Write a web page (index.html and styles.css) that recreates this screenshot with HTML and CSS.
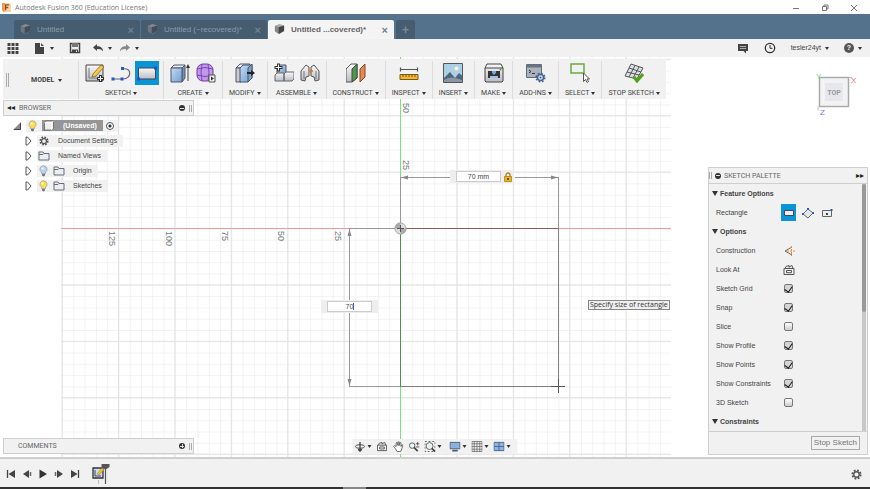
FILE: index.html
```
<!DOCTYPE html>
<html lang="en">
<head>
  <meta charset="UTF-8">
  <title>Autodesk Fusion 360 (Education License)</title>
  <meta name="viewport" content="width=device-width,initial-scale=1">
  <link rel="stylesheet" href="styles.css">
</head>
<body>
  <!-- shared icons -->
  <svg class="defs" aria-hidden="true">
    <defs>
      <linearGradient id="blue" x1="0" y1="0" x2="1" y2="1"><stop offset="0" stop-color="#c4dcf4"/><stop offset="1" stop-color="#6f9fd2"/></linearGradient>
      <linearGradient id="grey" x1="0" y1="0" x2="0" y2="1"><stop offset="0" stop-color="#fafafa"/><stop offset="1" stop-color="#b9bcc4"/></linearGradient>
      <symbol id="cube" viewBox="0 0 12 12"><path d="M1 2 6 0l5 1.500v6L6 11 1 8z" fill="#aaa"/><path d="M1 2l4 1.500V11L1 8z" fill="#888"/><path d="M5 3.500l6-2v6L5 11z" fill="#444"/></symbol>
      <symbol id="bulb" viewBox="0 0 9 12"><path d="M4.500.8A3.500 3.500 0 0 0 2.500 7.200V8.500h4V7.200A3.500 3.500 0 0 0 4.500.8z" stroke="#888" stroke-width=".6"/><path d="M3 9h3v1.500L4.500 11.500 3 10.500z" fill="#777"/><circle cx="3.500" cy="3.500" r="1.200" fill="#fff" opacity=".7"/></symbol>
      <symbol id="folder" viewBox="0 0 12 10"><path d="M1 9V1h4l1 1.500h5V9zM1 3.500h4l1-1" fill="#eceef2" stroke="#666c78"/></symbol>
      <symbol id="gear" viewBox="0 0 12 12"><circle cx="6" cy="6" r="4.500" fill="none" stroke="#555" stroke-width="2" stroke-dasharray="2 1.530"/><circle cx="6" cy="6" r="3" fill="none" stroke="#555" stroke-width="1.500"/></symbol>
      <symbol id="twist" viewBox="0 0 7 10"><path d="M1 1h1.500L6 5 2.500 9H1z" fill="#f4f4f4" stroke="#555"/></symbol>
      <symbol id="look" viewBox="0 0 12 12"><path d="M1 4.500h10v6H1zM3.500 6.500h5v2.200h-5zM2 4.500l1-2 3-1v2M6 3l3-1.500 1 3" fill="none" stroke="#555"/></symbol>
    </defs>
  </svg>

  <header class="titlebar">
    <svg class="logo" viewBox="0 0 10 10"><path d="M0 0h8l2 2v8H2L0 8z" fill="#fbd3a8"/><path d="M0 0h3v10H2L0 8z" fill="#f09a4e"/><path d="M4 8V2h4M4 5h3" fill="none" stroke="#9a4d1c" stroke-width="1.500"/></svg>
    <h1>Autodesk Fusion 360 (Education License)</h1>
    <div class="window-btns">
      <button aria-label="Minimize"><svg viewBox="0 0 8 8"><path d="M1 4.500h6"/></svg></button>
      <button aria-label="Restore"><svg viewBox="0 0 8 8"><path d="M1.500 2.500h4v4h-4zM3 2V1h4v4H6"/></svg></button>
      <button aria-label="Close"><svg viewBox="0 0 8 8"><path d="M1 1l6 6M7 1L1 7"/></svg></button>
    </div>
  </header>

  <nav class="tabs">
    <div class="tab"><svg><use href="#cube"/></svg><span>Untitled</span><button aria-label="Close tab">×</button></div>
    <div class="tab"><svg><use href="#cube"/></svg><span>Untitled (~recovered)*</span><button aria-label="Close tab">×</button></div>
    <div class="tab active"><svg><use href="#cube"/></svg><span>Untitled ...covered)*</span><button aria-label="Close tab">×</button></div>
    <button class="new-tab" aria-label="New tab">+</button>
  </nav>

  <div class="quickbar">
    <button aria-label="Data panel"><svg viewBox="0 0 12 12"><path d="M.5 1h3v3h-3zM4.500 1h3v3h-3zM8.500 1h3v3h-3zM.5 5h3v3h-3zM4.500 5h3v3h-3zM8.500 5h3v3h-3zM.5 9h3v3h-3zM4.500 9h3v3h-3zM8.500 9h3v3h-3z" fill="#444"/></svg></button>
    <button class="caret" aria-label="File"><svg viewBox="0 0 12 12"><path d="M1 1h5v4h4v7H1z" fill="#444"/><path d="M7 1l3 3H7z" fill="#555"/></svg></button>
    <button aria-label="Save"><svg viewBox="0 0 12 12"><path d="M1.500 1.500h9v9h-9z" fill="#eee" stroke="#444" stroke-width="1.500"/><path d="M3 1h6v4H3z" fill="#777"/><path d="M3 7.500h6V11H3z" fill="#444"/><path d="M7 8.500h1V10H7z" fill="#eee"/></svg></button>
    <button class="caret undo" aria-label="Undo"><svg viewBox="0 0 12 12"><path d="M1 5.500 5 2v2.300c4 0 6 2 6 5.200-1-2-3-2.700-6-2.500v2z" fill="#444"/></svg></button>
    <button class="caret redo" aria-label="Redo"><svg viewBox="0 0 12 12"><path d="M11 5.500 7 2v2.300c-4 0-6 2-6 5.200 1-2 3-2.700 6-2.500v2z" fill="#888"/></svg></button>
    <div class="account">
      <button aria-label="Notifications"><svg viewBox="0 0 12 12"><path d="M1 2h10v7H9v2.500L6.500 9H1z" fill="#444"/><path d="M3 4.500h6M3 6.500h6" stroke="#aaa"/></svg></button>
      <button aria-label="Job status"><svg viewBox="0 0 12 12"><circle cx="6" cy="6" r="4.700" fill="none" stroke="#333" stroke-width="1.300"/><path d="M6 3v3.300h2.500" fill="none" stroke="#333"/></svg></button>
      <button class="caret">tesler24yt</button>
      <button class="caret" aria-label="Help"><span class="help">?</span></button>
    </div>
  </div>

  <main class="workspace">
    <!-- sketch canvas: grid, axes, rectangle being drawn -->
    <svg class="canvas" width="672" height="400">
      <defs>
        <pattern id="minor" x="400.500" y="171.500" width="11.280" height="11.280" patternUnits="userSpaceOnUse"><path d="M0 0H12M0 0V12" stroke="#e6e6e6" fill="none"/></pattern>
        <pattern id="major" x="400" y="171" width="56.400" height="56.400" patternUnits="userSpaceOnUse"><path d="M0 .5H57M.5 0V57" stroke="#e2e2e2" fill="none"/></pattern>
      </defs>
      <rect x="61" width="610" height="400" fill="url(#minor)"/>
      <rect x="61" width="610" height="400" fill="url(#major)"/>
      <path d="M61 171.500H671" stroke="#ee9c9c"/>
      <path d="M400.500 0V400" stroke="#7be27b"/>
      <path d="M349 171.500H400M400.500 120V171M349 329.500H400" stroke="#999"/>
      <path d="M400 171.500H558" stroke="#8a5c5c"/>
      <path d="M400.500 171V329" stroke="#4f8f57"/>
      <path d="M558.500 120V171" stroke="#999"/>
      <path d="M558.500 171V329M400 329.500H558" stroke="#808080"/>
      <path d="M401 120.500H450M515 120.500H558M349.500 172V243M349.500 256V329" stroke="#999"/>
      <path d="M401 120.500l7-2v4zM558 120.500l-7-2v4zM349.500 172l-2 7h4zM349.500 329l-2-7h4z" fill="#888"/>
      <path d="M551 329.500H565M558.500 322V336" stroke="#555"/>
      <circle cx="400.500" cy="171.500" r="5.500" fill="#ddd" stroke="#aaa"/>
      <path d="M400.500 171.500v-6a6 6 0 0 0-6 6zM400.500 171.500v6a6 6 0 0 0 6-6z" fill="#aaa"/>
      <path d="M400.500 168v7M397 171.500h7" stroke="#555"/>
      <g class="ruler">
        <text transform="translate(109 174) rotate(90)">125</text>
        <text transform="translate(166 174) rotate(90)">100</text>
        <text transform="translate(222 174) rotate(90)">75</text>
        <text transform="translate(278 174) rotate(90)">50</text>
        <text transform="translate(335 174) rotate(90)">25</text>
        <text transform="translate(403 46) rotate(90)">50</text>
        <text transform="translate(403 103) rotate(90)">25</text>
      </g>
    </svg>

    <div class="toolbar">
      <div class="model"><i class="grip"></i><button class="caret">MODEL</button></div>
      <div class="group">
        <div class="tools">
          <button aria-label="Create sketch"><svg viewBox="0 0 20 20"><path d="M1 2h17v16H1z" fill="url(#grey)" stroke="#444"/><path d="M4 5v10h10" fill="none" stroke="#777"/><path d="M8 11l8-9 3 2-8 9-4 1z" fill="#f4c84a" stroke="#7a5a20" stroke-width=".7"/><path d="M15.500 12v7M12 15.500h7" stroke="#333" stroke-width="3"/><path d="M15.500 13v5M13 15.500h5" stroke="#fff"/></svg></button>
          <button aria-label="Line"><svg viewBox="0 0 20 20"><path d="M2 16h10M12 6c9-2 9 10 0 10" fill="none" stroke="#667" stroke-width="1.200"/><path d="M.5 14.500h3v3h-3zM9.500 14.500h3v3h-3zM10 4h3v3h-3z" fill="#2458c8"/></svg></button>
          <button class="on" aria-label="Rectangle"><svg viewBox="0 0 20 20"><path d="M1.500 5h17v11h-17z" fill="url(#grey)" stroke="#445"/><path d="M0 14.500h3v3H0zM17 3.500h3v3h-3z" fill="#2450c0"/></svg></button>
        </div>
        <button class="caret">SKETCH</button>
      </div>
      <div class="group">
        <div class="tools">
          <button aria-label="Extrude"><svg viewBox="0 0 20 20"><path d="M1 5l3-3h11l-3 3z" fill="#e1eefb" stroke="#556"/><path d="M12 5l3-3v13l-3 4z" fill="#6c93bd" stroke="#556"/><path d="M1 5h11v14H1z" fill="url(#blue)" stroke="#556"/><path d="M18 18V4" stroke="#444"/><path d="M18 1l-2 4h4z" fill="#333"/></svg></button>
          <button aria-label="Create form"><svg viewBox="0 0 20 20"><rect x="1" y="1" width="16" height="17" rx="6" fill="#c397ec" stroke="#6f3ba5"/><path d="M1 6q8-3 16 0M1 12q8 3 16 0M6 1q-2 8 0 17M12 1q2 8 0 17" fill="none" stroke="#7b46b0"/><path d="M13 12h6v7h-6z" fill="#eee" stroke="#555"/><path d="M15 13.500l3 2-3 2z" fill="#333"/></svg></button>
        </div>
        <button class="caret">CREATE</button>
      </div>
      <div class="group">
        <div class="tools">
          <button aria-label="Press pull"><svg viewBox="0 0 20 20"><path d="M1 5l4-4h10l-4 4z" fill="#eef" stroke="#556"/><path d="M1 5h5v14H1z" fill="#ccc" stroke="#556"/><path d="M5 5l3-3h9v13l-4 4H5z" fill="url(#blue)" stroke="#456"/><path d="M13 19V5l4-4v14z" fill="#7da5cf" stroke="#456"/><path d="M12 10h5" stroke="#222" stroke-width="2"/><path d="M16 7l4 3-4 3z" fill="#222"/></svg></button>
        </div>
        <button class="caret">MODIFY</button>
      </div>
      <div class="group">
        <div class="tools">
          <button aria-label="New component"><svg viewBox="0 0 20 20"><path d="M3 4l2-2h7v9H3z" fill="url(#blue)" stroke="#556"/><path d="M1 12l2-2h7v8H1zM10 11l2-2h8v7l-2 2h-8z" fill="url(#grey)" stroke="#666"/><path d="M4.500.5v8M.5 4.500h8" stroke="#333" stroke-width="3"/><path d="M4.500 1.500v6M1.500 4.500h6" stroke="#fff"/></svg></button>
          <button aria-label="Joint"><svg viewBox="0 0 20 20"><path d="M1 8l5-6 3 2v9l-3 1-1 4-4-1zM19 8l-5-6-3 2v9l3 1 1 4 4-1z" fill="url(#grey)" stroke="#555"/><path d="M4 8v8M16 8v8" stroke="#777"/><path d="M9 8h4M11 6v4" stroke="#e3772a" stroke-width="1.500"/></svg></button>
        </div>
        <button class="caret">ASSEMBLE</button>
      </div>
      <div class="group">
        <div class="tools">
          <button aria-label="Offset plane"><svg viewBox="0 0 20 20"><path d="M0 6l5-5h6v14l-5 4H0z" fill="url(#grey)" stroke="#555"/><path d="M6 6l5-5v14l-5 4z" fill="#4c9a4c" stroke="#444"/><path d="M14 6l5-5v13l-5 5z" fill="#e88a50" stroke="#854522"/></svg></button>
        </div>
        <button class="caret">CONSTRUCT</button>
      </div>
      <div class="group">
        <div class="tools">
          <button aria-label="Measure"><svg viewBox="0 0 20 20"><path d="M1 6.500h18M1.500 4.500v4M18.500 4.500v4" stroke="#555" stroke-width="1.200"/><path d="M1 11.500h18v5H1z" fill="#f1b833" stroke="#79571a"/><path d="M4 12v2M7 12v2M10 12v2M13 12v2M16 12v2" stroke="#79571a"/></svg></button>
        </div>
        <button class="caret">INSPECT</button>
      </div>
      <div class="group">
        <div class="tools">
          <button aria-label="Insert image"><svg viewBox="0 0 20 20"><path d="M.5.5h19v19H.5z" fill="#acd0e5" stroke="#555"/><path d="M1 15l6-6 5 6 4-5 3.500 3v6H1z" fill="#53657a"/><path d="M1 17q6-5 18 0v2H1z" fill="#8996a5"/><circle cx="13.500" cy="5.500" r="2" fill="#fff8cf"/></svg></button>
        </div>
        <button class="caret">INSERT</button>
      </div>
      <div class="group">
        <div class="tools">
          <button aria-label="3D print"><svg viewBox="0 0 20 20"><path d="M3 1h14l2 4v13l-1 1H2l-1-1V5z" fill="url(#grey)" stroke="#444"/><path d="M1 5h18" stroke="#444"/><path d="M4 8h12v7H4z" fill="#333"/><path d="M8 8h4v2l-2 2-2-2z" fill="#77a6dd"/><path d="M6 13h8v2H6z" fill="#9ec0e8"/><circle cx="16.500" cy="6.500" r="1" fill="#3aa33a"/></svg></button>
        </div>
        <button class="caret">MAKE</button>
      </div>
      <div class="group">
        <div class="tools">
          <button aria-label="Scripts and add-ins"><svg viewBox="0 0 20 20"><path d="M.5 1.500h15v13H.5z" fill="#abb2bd" stroke="#666d78"/><path d="M1 3h14" stroke="#687282" stroke-width="3"/><path d="M3 7l2 1.500L3 10M6 10.500h3" fill="none" stroke="#333"/><circle cx="14.500" cy="14.500" r="3" fill="#dbe7f5" stroke="#47668f" stroke-width="1.500"/><circle cx="14.500" cy="14.500" r="4.300" fill="none" stroke="#47668f" stroke-width="1.500" stroke-dasharray="1.800 1.570"/><circle cx="14.500" cy="14.500" r="1" fill="#47668f"/></svg></button>
        </div>
        <button class="caret">ADD-INS</button>
      </div>
      <div class="group">
        <div class="tools">
          <button aria-label="Window selection"><svg viewBox="0 0 20 20"><path d="M1 1h13v9H1z" fill="none" stroke="#6ca83f" stroke-width="1.500"/><path d="M13.500 10v8.500l2-2 1.500 3 1.500-1-1.500-2.500h2.500z" fill="#fff" stroke="#444" stroke-width=".9"/></svg></button>
        </div>
        <button class="caret">SELECT</button>
      </div>
      <div class="group">
        <div class="tools">
          <button aria-label="Stop sketch"><svg viewBox="0 0 20 20"><path d="M7 1l12 4-6 11-12-3z" fill="#dcdfe5" stroke="#555"/><path d="M5 5l12 4M3 9l12 3M11 2.500L5 14M15 4L9 15" stroke="#555" fill="none"/><path d="M10 14l3 4 6-7" fill="none" stroke="#4fa314" stroke-width="3"/></svg></button>
        </div>
        <button class="caret">STOP SKETCH</button>
      </div>
    </div>

    <aside class="browser">
      <div class="panel-head"><button class="rewind" aria-label="Collapse">◂◂</button><h2>BROWSER</h2><button class="dot minus" aria-label="Minimize panel"></button><i class="grip"></i></div>
      <ul class="tree">
        <li class="root"><svg class="twist" viewBox="0 0 8 8"><path d="M0 8L8 0v8z" fill="#888"/><path d="M1 7.500h6.500V1" fill="none" stroke="#444"/></svg>
          <div class="node"><svg class="bulb lit"><use href="#bulb"/></svg><span class="name"><svg viewBox="0 0 12 12"><path d="M1 3l2-2h8v8l-2 2H1z" fill="#eee" stroke="#666"/><path d="M1 3h8v8M9 3l2-2" fill="none" stroke="#fff"/></svg>(Unsaved)</span><input type="radio" name="active" aria-label="Activate component" checked></div></li>
        <li><svg class="twist"><use href="#twist"/></svg><div class="node"><svg class="ico"><use href="#gear"/></svg><span>Document Settings</span></div></li>
        <li><svg class="twist"><use href="#twist"/></svg><div class="node"><svg class="ico"><use href="#folder"/></svg><span>Named Views</span></div></li>
        <li><svg class="twist"><use href="#twist"/></svg><div class="node"><svg class="bulb"><use href="#bulb"/></svg><svg class="ico"><use href="#folder"/></svg><span>Origin</span></div></li>
        <li><svg class="twist"><use href="#twist"/></svg><div class="node"><svg class="bulb lit"><use href="#bulb"/></svg><svg class="ico"><use href="#folder"/></svg><span>Sketches</span></div></li>
      </ul>
    </aside>

    <div class="comments panel-head"><h2>COMMENTS</h2><button class="dot plus" aria-label="Expand comments"></button><i class="grip"></i></div>

    <div class="dim width"><input type="text" value="70 mm" aria-label="Width"><svg viewBox="0 0 8 10"><path d="M2 5V3a2 2 0 0 1 4 0v2" fill="none" stroke="#a8811a" stroke-width="1.300"/><path d="M.5 4.500h7v5h-7z" fill="#eeb61c" stroke="#a8811a" stroke-width=".8"/><path d="M4 6v2" stroke="#333" stroke-width="1.500"/></svg></div>
    <div class="dim height"><input type="text" value="70" aria-label="Height"></div>
    <div class="tip" role="tooltip">Specify size of rectangle</div>

    <svg class="viewcube" viewBox="0 0 46 46" width="46" height="46">
      <path d="M9.500 7.500h29v29h-29z" fill="#f3f3f3" stroke="#aaa" stroke-width="1.500"/>
      <path d="M15 13h18v18H15z" fill="#e6e8ec"/>
      <path d="M8 36.500v4M39 7.500h3" stroke="#bbb"/>
      <text class="face" x="24" y="25">TOP</text>
      <text x="6" y="9" fill="#6be36b">Y</text>
      <text x="41" y="13" fill="#f07070">X</text>
      <text x="10" y="45" fill="#7070f0">Z</text>
    </svg>

    <section class="palette">
      <div class="palette-head"><i class="grip"></i><button class="dot minus" aria-label="Minimize panel"></button><h2>SKETCH PALETTE</h2><button class="rewind" aria-label="Collapse">▸▸</button></div>
      <div class="palette-body">
        <div class="rows">
          <h3>Feature Options</h3>
          <div class="row"><span>Rectangle</span>
            <div class="kinds">
              <button class="on" aria-label="2-point rectangle"><svg viewBox="0 0 12 12"><path d="M1.500 3.500h9v5h-9z" fill="#eee" stroke="#446"/></svg></button>
              <button aria-label="3-point rectangle"><svg viewBox="0 0 12 12"><path d="M1 7l5-5 5 4-5 5z" fill="#e4e7ec" stroke="#666"/><path d="M0 6h2v2H0zM5 1h2v2H5zM10 5h2v2h-2z" fill="#2458c8"/></svg></button>
              <button aria-label="Center rectangle"><svg viewBox="0 0 12 12"><path d="M1.500 3.500h9v6h-9z" fill="#eee" stroke="#666"/><path d="M5 6h2v2H5z" fill="#444"/><path d="M9.500 2h2v2h-2z" fill="#2458c8"/></svg></button>
            </div>
          </div>
          <h3>Options</h3>
          <div class="row"><span>Construction</span><button class="opt" aria-label="Construction"><svg viewBox="0 0 12 12"><path d="M9 2L2 6l7 4" fill="none" stroke="#666"/><path d="M4 6h8M8.500 1v10" stroke="#e98a32" stroke-dasharray="2 1"/></svg></button></div>
          <div class="row"><span>Look At</span><button class="opt" aria-label="Look At"><svg><use href="#look"/></svg></button></div>
          <label class="row"><span>Sketch Grid</span><input type="checkbox" checked></label>
          <label class="row"><span>Snap</span><input type="checkbox" checked></label>
          <label class="row"><span>Slice</span><input type="checkbox"></label>
          <label class="row"><span>Show Profile</span><input type="checkbox" checked></label>
          <label class="row"><span>Show Points</span><input type="checkbox" checked></label>
          <label class="row"><span>Show Constraints</span><input type="checkbox" checked></label>
          <label class="row"><span>3D Sketch</span><input type="checkbox"></label>
          <h3>Constraints</h3>
        </div>
        <div class="scroll"><div class="thumb"></div></div>
      </div>
      <div class="palette-foot"><button>Stop Sketch</button></div>
    </section>

    <div class="navbar">
      <button class="caret" aria-label="Orbit"><svg viewBox="0 0 12 12"><path d="M6 1v10M4 9l2 2 2-2" fill="none" stroke="#333" stroke-width="1.300"/><ellipse cx="6" cy="6" rx="5" ry="2" fill="none" stroke="#444"/></svg></button>
      <button aria-label="Look at"><svg><use href="#look"/></svg></button>
      <button aria-label="Pan"><svg viewBox="0 0 12 12"><path d="M3 8L1 6l1-1 2 1V2l1-.5L6 5V1l1.200 0V5L8 1.500l1.200.5V6l1-2 1 .5L10 9l-1 2.500H5z" fill="#fff" stroke="#555" stroke-width=".9"/></svg></button>
      <button aria-label="Zoom"><svg viewBox="0 0 12 12"><circle cx="4" cy="5" r="3" fill="#eef6f8" stroke="#555"/><path d="M6 7l4 4" stroke="#444" stroke-width="1.800"/><path d="M8 3h4M10 1v4M8 6.500h4" stroke="#444" stroke-width=".9"/></svg></button>
      <button class="caret" aria-label="Fit"><svg viewBox="0 0 12 12"><path d="M.5 .5h11v11H.5z" fill="none" stroke="#555" stroke-dasharray="2 2"/><circle cx="5.500" cy="5.500" r="3.800" fill="#e6f1f0" stroke="#666"/><path d="M8 8l3.500 3.500" stroke="#444" stroke-width="2"/></svg></button>
      <button class="caret first" aria-label="Display settings"><svg viewBox="0 0 12 12"><path d="M.5 1.500h11v7H.5z" fill="#8cb1e0" stroke="#4d5b70"/><path d="M3 10.500h6" stroke="#4d5b70" stroke-width="2"/></svg></button>
      <button class="caret" aria-label="Grid and snaps"><svg viewBox="0 0 12 12"><path d="M.5 .5h11v11H.5zM3 0v12M6 0v12M9 0v12M0 3h12M0 6h12M0 9h12" fill="none" stroke="#666" stroke-width=".8"/></svg></button>
      <button class="caret" aria-label="Viewports"><svg viewBox="0 0 12 12"><path d="M.5 1.500h11v9H.5zM6 1.500v9M.5 6h11" fill="#8fb4e2" stroke="#46648f"/></svg></button>
    </div>
  </main>

  <footer class="timeline">
    <div class="player">
      <button aria-label="Go to start"><svg viewBox="0 0 10 10"><path d="M1.500 1v8" stroke="#444" stroke-width="1.300"/><path d="M9 1v8L2.500 5z" fill="#444"/></svg></button>
      <button aria-label="Step back"><svg viewBox="0 0 10 10"><path d="M7 1v8L1 5z" fill="#444"/><path d="M8.500 3v4" stroke="#666" stroke-width="1.500"/></svg></button>
      <button aria-label="Play"><svg viewBox="0 0 10 10"><path d="M1.500 .5v9L9 5z" fill="#333"/></svg></button>
      <button aria-label="Step forward"><svg viewBox="0 0 10 10"><path d="M3 1v8l6-4z" fill="#444"/><path d="M1.500 3v4" stroke="#666" stroke-width="1.500"/></svg></button>
      <button aria-label="Go to end"><svg viewBox="0 0 10 10"><path d="M8.500 1v8" stroke="#444" stroke-width="1.300"/><path d="M1 1v8l6.500-4z" fill="#444"/></svg></button>
    </div>
    <button class="feature" aria-label="Sketch1"><svg viewBox="0 0 18 22"><path d="M1 5h10v10H1z" fill="#c9def2" stroke="#333" stroke-width="1.300"/><path d="M3 7v6h6" fill="none" stroke="#446"/><path d="M5 11l5-6 2 1.500L7 12z" fill="#f2c230" stroke="#98701d" stroke-width=".5"/><path d="M6.500 17v4" stroke="#bbb"/><path d="M9.500 1h8v3l-3 2h-2l-3-2z" fill="#555"/><path d="M13.500 5v16" stroke="#555" stroke-width="1.200"/></svg></button>
    <button class="settings" aria-label="Timeline settings"><svg><use href="#gear"/></svg></button>
  </footer>
  <div class="taskbar"></div>
</body>
</html>
```
FILE: styles.css
```
:root {
  --panel: #f1f1f1; --line: #cfcfcf;
  --text: #444; --accent: #0a94d8;
}
* {box-sizing:border-box;}
body {
  margin:0; height:100vh; overflow:hidden;
  display:flex; flex-direction:column;
  font:7px/10px "Liberation Sans", Arial, sans-serif;
  color:var(--text); background:#fff;
}
h1, h2, h3, ul {margin:0; padding:0; font-size:inherit; font-weight:normal;}
ul {list-style:none;}
button {
  margin:0; padding:0; border:0; background:none;
  font:inherit; color:inherit;
  display:flex; align-items:center; justify-content:center;
}
svg {display:block; flex:none;}
.defs {position:absolute; width:0; height:0;}
.caret::after {
  content:""; margin-left:2px;
  border:2px solid transparent; border-top:3px solid #333; border-bottom:0;
}

/* title bar */
.titlebar {display:flex; align-items:center; height:14px; padding:1px 12px 0 2px; flex:none;}
.logo {width:9px; height:9px; margin-right:4px;}
.titlebar h1 {font-family:"Open Sans", sans-serif; color:#777;}
.window-btns {display:flex; gap:21px; margin-left:auto;}
.window-btns svg {width:8px; height:8px; fill:none; stroke:#777;}

/* document tabs */
.tabs {
  display:flex; gap:1px; align-items:flex-end; flex:none;
  height:25px; padding-left:14px; background:#55728c;
}
.tab {
  width:126px; height:19px; padding:0 6px;
  display:flex; align-items:center;
  background:#465c71; color:#8b9cab; font-size:8px;
  border-radius:2px 2px 0 0;
}
.tab svg {width:11px; height:11px; margin-right:6px; opacity:.6;}
.tab button {margin-left:auto; font-size:11px; font-weight:bold; color:#73818e;}
.tab.active {background:#f4f4f4; color:#666; font-weight:bold;}
.tab.active svg {opacity:1;}
.new-tab {width:19px; height:19px; background:#465c71; color:#7e8c98; font-size:12px; font-weight:bold; border-radius:2px 2px 0 0; margin-left:1px;}

/* quick access bar */
.quickbar {
  display:flex; align-items:center; flex:none;
  height:18px; padding:0 8px 0 7px; gap:15px;
  background:var(--panel);
}
.quickbar svg {width:12px; height:12px;}
.quickbar .caret::after {margin-left:4px;}
.quickbar .undo {margin-left:-4px;}
.quickbar .redo {margin-left:-8px;}
.account {display:flex; align-items:center; gap:15px; margin-left:auto;}
.help {width:10px; height:10px; border-radius:50%; background:#555; color:#fff; font-weight:bold; text-align:center;}

/* workspace */
.workspace {position:relative; flex:1; min-height:0; overflow:hidden;}
.canvas {position:absolute; top:0; left:0;}
.ruler {font-size:9px; fill:#777;}
.toolbar {
  position:absolute; top:2px; left:3px;
  display:flex; padding:2px 0 0;
  background:var(--panel); font-family:Roboto, sans-serif;
}
.model {display:flex; align-items:center; width:75px; padding-left:3px; gap:22px; font-weight:bold;}
.model .caret::after {margin-left:4px;}
.grip {width:3px; height:7px; border:solid #aaa; border-width:0 1px;}
.model .grip {height:14px;}
.group {display:flex; flex-direction:column; align-items:center; gap:2px; padding:0 4px; border-left:1px solid #ddd;}
.tools {display:flex; gap:2px;}
.tools button {width:24px; height:24px;}
.tools svg {width:20px; height:20px;}
.group > .caret {padding:0 2px; height:12px; white-space:nowrap;}
.on {background:var(--accent);}

/* left panels */
.panel-head {
  display:flex; align-items:center; width:191px; height:16px; padding:0 1px 0 3px;
  background:var(--panel); border:1px solid var(--line);
  font-family:Roboto, sans-serif; color:#666;
}
.panel-head h2 {flex:1;}
.panel-head .grip {margin-left:4px;}
.rewind {font:8px/10px "DejaVu Sans", sans-serif; color:#222;}
.panel-head .rewind {width:8px; margin-right:4px;}
.dot {position:relative; width:6px; height:6px; border-radius:50%; background:#333;}
.dot::after {content:""; width:4px; height:1px; background:#ddd;}
.dot.plus::before {content:""; position:absolute; width:1px; height:4px; background:#ddd;}
.browser {position:absolute; top:43px; left:3px;}
.comments {position:absolute; left:3px; bottom:3px; padding-left:14px;}
.tree {padding:3px 0 0 22px; display:flex; flex-direction:column; gap:2px;}
.tree li {display:flex; align-items:center; height:13px; gap:5px;}
.tree .root {margin-left:-12px;}
.twist {width:7px; height:10px;}
.root .twist {width:8px; height:8px;}
.node {display:flex; align-items:center; height:12px; padding:0 6px 0 1px; background:var(--panel);}
.node > span {margin-left:8px;}
.bulb {width:9px; height:12px; margin-right:5px; margin-left:1px; fill:#bcd4f3;}
.bulb.lit {fill:#fbe04a;}
.ico {width:12px; height:10px;}
.node .name {
  display:flex; align-items:center; gap:8px; margin:0; padding:0 6px 0 1px;
  height:11px; background:#969696; color:#fff; font-weight:bold;
}
.name svg {width:12px; height:11px;}
.root .node {padding-right:4px;}
.node input {appearance:none; width:8px; height:8px; margin:0 0 0 3px; border:1px solid #555; border-radius:50%; background:radial-gradient(#333 0 1px, #fff 2px);}

/* dimension inputs on the sketch */
.dim {position:absolute; display:flex; align-items:center; height:13px; padding:0 6px; gap:3px; background:#eee;}
.dim input {
  width:45px; height:11px; padding:0; border:1px solid #ccc; background:#fff;
  font:inherit; color:#444; text-align:center;
}
.dim.width {top:113px; left:450px; padding-right:2px;}
.dim.width svg {width:8px; height:10px;}
.dim.height {top:243px; left:321px;}
.dim.height::after {content:""; position:absolute; left:32px; top:3px; width:1px; height:7px; background:#36c;}
.tip {
  position:absolute; top:243px; left:588px; padding:0 1px;
  border:1px solid #888; background:#eee; color:#333;
  font:7px/8px "Open Sans", sans-serif; white-space:nowrap;
}
.viewcube {position:absolute; top:13px; right:14px; width:46px; height:46px;}
.viewcube text {font-size:8px;}
.viewcube .face {font-size:7px; font-family:Roboto, sans-serif; font-weight:bold; fill:#999; text-anchor:middle;}

/* sketch palette */
.palette {
  position:absolute; top:110px; right:2px; width:160px;
  background:var(--panel); border:1px solid var(--line);
}
.palette-head {
  display:flex; align-items:center; height:16px; padding:0 3px 0 0; gap:3px;
  border-bottom:1px solid var(--line); font-family:Roboto, sans-serif; color:#666;
}
.palette-head h2 {flex:1;}
.palette-body {display:flex;}
.rows {flex:1;}
.rows h3 {display:flex; align-items:center; height:19px; padding-left:3px; font-weight:bold;}
.rows h3::before {content:""; margin-right:2px; border:3px solid transparent; border-top:5px solid #333; border-bottom:0;}
.row {display:flex; align-items:center; height:19px; padding-left:7px;}
.row > span {width:64px;}
.kinds {display:flex; gap:4px;}
.kinds button {width:15px; height:17px;}
.row svg {width:12px; height:12px;}
.opt {width:15px;}
.row > span + * {margin-left:1px;}
.row input {
  appearance:none; width:9px; height:9px; margin:0;
  border:1px solid #777; border-radius:2px;
  background:linear-gradient(#fff, #ccc);
  display:flex; justify-content:center;
}
.row span + input {margin-left:4px;}
.row input:checked {background:#d4d4d4;}
.row input:checked::after {content:""; width:4px; height:6px; border:solid #111; border-width:0 1px 1px 0; transform:rotate(35deg);}
.scroll {width:4px; margin-right:1px; background:#c6c8ca;}
.thumb {height:52%; background:#999; border-radius:2px;}
.palette-foot {display:flex; justify-content:flex-end; padding:4px 7px 4px 0; border-top:1px solid var(--line);}
.palette-foot button {padding:1px 2px; border:1px solid #aaa; font-size:8px; color:#777;}

/* navigation bar */
.navbar {
  position:absolute; bottom:3px; left:50%; transform:translateX(-50%);
  display:flex; align-items:center; gap:5px; height:15px; padding:0 7px 0 2px;
  background:var(--panel);
}
.navbar svg {width:11px; height:11px;}
.navbar .first {margin-left:3px;}

/* timeline */
.timeline {
  display:flex; align-items:center; flex:none;
  height:30px; padding:2px 8px 0 6px;
  background:var(--panel); border-top:2px solid var(--line);
}
.player {display:flex; gap:6px;}
.player svg {width:10px; height:10px;}
.feature {margin-left:12px;}
.feature svg {width:18px; height:22px;}
.settings {margin-left:auto;}
.settings svg {width:11px; height:11px;}
.taskbar {height:2px; flex:none; background:linear-gradient(90deg, #333 343px, #888 343px, #888 366px, #333 366px);}
```
